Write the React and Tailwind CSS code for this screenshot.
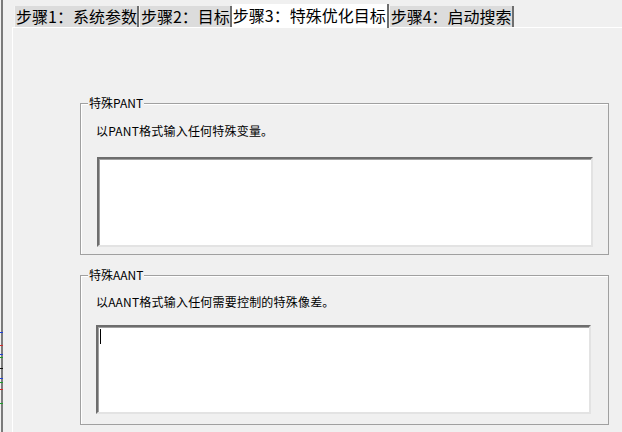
import React from 'react';

const tabs = [
  { label: '步骤1：系统参数', active: false },
  { label: '步骤2：目标', active: false },
  { label: '步骤3：特殊优化目标', active: true },
  { label: '步骤4：启动搜索', active: false },
];

// little coloured ticks on the window edge at the far left
const ticks = [
  { y: 332, c: '#1f3fd6' },
  { y: 345, c: '#d12b2b' },
  { y: 354, c: '#1f3fd6' },
  { y: 357, c: '#1e9c2a' },
  { y: 368, c: '#111111' },
  { y: 378, c: '#1f3fd6' },
  { y: 382, c: '#1e9c2a' },
  { y: 389, c: '#d12b2b' },
  { y: 403, c: '#1e9c2a' },
];

function EdgeStrip() {
  return (
    <svg width="12" height="432" className="shrink-0">
      <rect x="1" y="0" width="2" height="432" fill="#7a7a7a" />
      {ticks.map((t) => (
        <rect key={t.y} x="0" y={t.y} width="3" height="1" fill={t.c} />
      ))}
    </svg>
  );
}

function Tab({ label, active }) {
  if (active) {
    return (
      <div className="relative -mb-px h-[24px] bg-white px-[1px] pt-[3px] text-[16px] leading-[17px] text-black border-r-2 border-r-[#6e6e6e]">
        {label}
      </div>
    );
  }
  return (
    <div className="h-[21px] bg-[#dcdcdc] pl-[1px] pt-[1px] text-[16px] leading-[18px] text-black border-l border-l-[#f4f4f4] border-r-2 border-r-[#6e6e6e]">
      {label}
    </div>
  );
}

function GroupBox({ title, label, className, labelTop, boxTop, boxClass, cursor }) {
  return (
    <div className={`relative border border-[#a0a0a0] shadow-[inset_1px_1px_0_#ffffff] ${className}`}>
      <span className="absolute -top-[9px] left-[7px] bg-[#f0f0f0] px-[1px] text-[12px] leading-[16px] text-black">
        {title}
      </span>
      <div className="pl-[15px]" style={{ paddingTop: labelTop }}>
        <div className="text-[12px] leading-[16px] tracking-[0.2px] text-black">{label}</div>
        <div
          className={`relative border-2 border-t-[#6d6d6d] border-l-[#6d6d6d] border-r-[#e3e3e3] border-b-[#e3e3e3] bg-white shadow-[inset_1px_1px_0_#a0a0a0] ${boxClass}`}
          style={{ marginTop: boxTop }}
        >
          {cursor && <div className="absolute left-[2px] top-[2px] h-[15px] w-px bg-black" />}
        </div>
      </div>
    </div>
  );
}

export default function App() {
  return (
    <div className="flex h-[432px] w-[622px] overflow-hidden bg-[#f0f0f0] font-['Noto_Sans_CJK_SC','Microsoft_YaHei',sans-serif]">
      <EdgeStrip />
      <div className="flex min-w-0 flex-1 flex-col">
        <div className="flex h-[27px] shrink-0 items-end pl-[2px] whitespace-nowrap">
          {tabs.map((t) => (
            <Tab key={t.label} label={t.label} active={t.active} />
          ))}
        </div>
        <div className="flex-1 border-l border-t border-white pl-[67px] pt-[75px]">
          <GroupBox
            title="特殊PANT"
            label="以PANT格式输入任何特殊变量。"
            className="h-[152px] w-[529px]"
            labelTop={19}
            boxTop={18}
            boxClass="ml-px h-[90px] w-[496px]"
          />
          <GroupBox
            title="特殊AANT"
            label="以AANT格式输入任何需要控制的特殊像差。"
            className="mt-[20px] h-[150px] w-[529px]"
            labelTop={18}
            boxTop={15}
            boxClass="h-[89px] w-[495px]"
            cursor
          />
        </div>
      </div>
    </div>
  );
}
